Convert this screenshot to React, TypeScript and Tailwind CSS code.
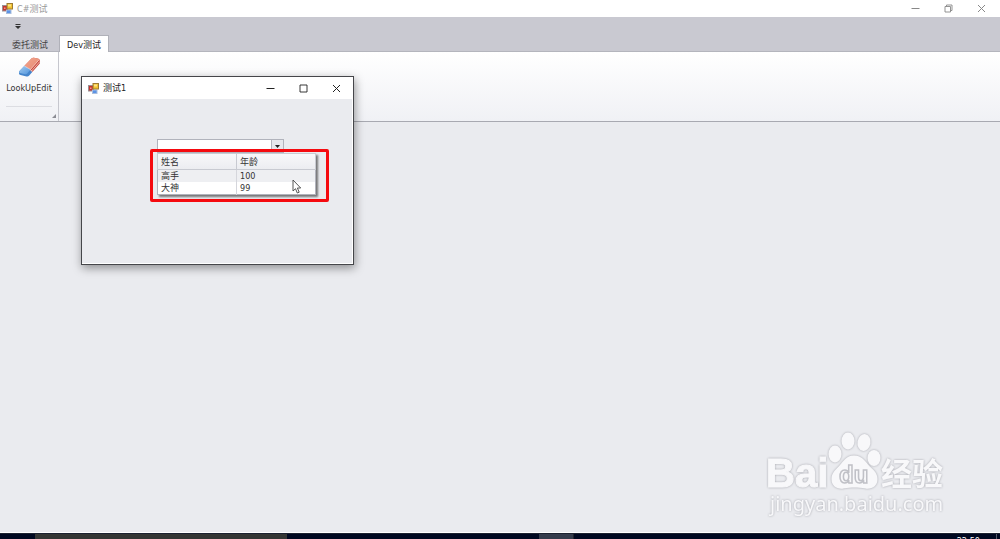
import { useState } from "react";

type Person = {
  name: string;
  age: number;
};

type WindowButtonsProps = {
  className: string;
  maximized?: boolean;
};

const people: Person[] = [
  { name: "高手", age: 100 },
  { name: "大神", age: 99 },
];

const tabs = ["委托测试", "Dev测试"];

function FormIcon() {
  return (
    <svg className="h-[11px] w-[11px] flex-shrink-0" viewBox="0 0 11 11" aria-hidden="true">
      <rect x="0.5" y="2.5" width="5" height="5.5" fill="#c5352d" stroke="#9a8f94" />
      <rect x="4.5" y="7" width="4.5" height="3.5" fill="#5b93e6" stroke="#a9bedd" />
      <rect x="5" y="0.5" width="5.5" height="5.5" fill="#f3c32f" stroke="#9d7b33" />
      <rect x="6" y="1.5" width="3" height="2" fill="#fbe48a" />
      <rect x="2" y="4.5" width="1.5" height="1.5" fill="#ef9a90" />
    </svg>
  );
}

function WindowButtons({ className, maximized = false }: WindowButtonsProps) {
  return (
    <div className={`ml-auto flex h-full ${className}`}>
      <button type="button" aria-label="Minimize" className="flex w-[33px] items-center justify-center">
        <svg className="h-[9px] w-[9px]" viewBox="0 0 9 9" fill="none" stroke="currentColor">
          <path d="M0.5 4.5h8" />
        </svg>
      </button>
      <button type="button" aria-label="Maximize" className="flex w-[33px] items-center justify-center">
        <svg className="h-[9px] w-[9px]" viewBox="0 0 9 9" fill="none" stroke="currentColor">
          {maximized ? (
            <path d="M1 2.5h5.5v5.5h-5.5zM2.5 2.5v-1.5h5.5v5.5h-1.5" strokeWidth="0.9" />
          ) : (
            <path d="M1 1h7v7h-7z" strokeWidth="0.9" />
          )}
        </svg>
      </button>
      <button type="button" aria-label="Close" className="flex w-[33px] items-center justify-center">
        <svg className="h-[9px] w-[9px]" viewBox="0 0 9 9" fill="none" stroke="currentColor">
          <path d="M1 1l7 7M8 1l-7 7" />
        </svg>
      </button>
    </div>
  );
}

function EraserIcon() {
  return (
    <svg className="h-[22px] w-[24px]" viewBox="0 0 24 22" aria-hidden="true">
      <defs>
        <linearGradient id="eraserRed" x1="0" y1="0" x2="1" y2="1">
          <stop offset="0" stopColor="#f3a58c" />
          <stop offset="1" stopColor="#e58a74" />
        </linearGradient>
        <linearGradient id="eraserBlue" x1="0" y1="0" x2="1" y2="1">
          <stop offset="0" stopColor="#a5cdf0" />
          <stop offset="1" stopColor="#4f93dc" />
        </linearGradient>
      </defs>
      <path d="M14.5 2.5q1-1 2.400-.7l4.600 1q1.500.5 1.300 2v2.700l-7.500 8.500-8-6z" fill="#c94a3c" />
      <path d="M14.5 2.5q1-1 2.400-.7l4.600 1q1 .3.300 1.200l-8.300 9.500-6.200-3.500z" fill="url(#eraserRed)" />
      <path d="M7.300 10l8 6-3.300 3.800q-1 1-2.500.6l-6-1.400q-1.500-.4-1.500-1.600v-2z" fill="#4585cc" />
      <path d="M7.300 10l6.200 3.500-3.500 4.300q-.6.700-1.800.4l-5.200-1.300q-1.800-.5-.5-1.900z" fill="url(#eraserBlue)" />
      <path d="M13.500 13.500l8.300-9.500M14.500 15l8.200-9.300" fill="none" stroke="#fbe0d8" strokeWidth="0.7" />
      <path d="M7.300 10l6.200 3.500 1.800 2" fill="none" stroke="#f5eff2" strokeWidth="0.6" />
    </svg>
  );
}

function LookUpEdit() {
  const [value, setValue] = useState("");
  const [open, setOpen] = useState(true);
  const [active, setActive] = useState(0);

  return (
    <div className="relative w-[127px]">
      <div className="flex h-[14px] border border-[#b1b3bc] bg-white">
        <input
          type="text"
          aria-label="LookUpEdit"
          value={value}
          onChange={(e) => setValue(e.target.value)}
          className="min-w-0 flex-1 px-1 text-[9px] outline-none"
        />
        <button
          type="button"
          aria-label="Open list"
          onClick={() => setOpen(!open)}
          className="flex w-3 items-center justify-center border-l border-[#b1b3bc] bg-[#e6e7ec]"
        >
          <svg className="h-[3px] w-[5px]" viewBox="0 0 5 3" aria-hidden="true">
            <path d="M0 0h5l-2.5 3z" fill="#222" />
          </svg>
        </button>
      </div>

      {open && (
        <div className="absolute top-[10px] -left-[7px] rounded-[2px] border-3 border-[#f50a0f] pt-px pr-[10px] pb-1 pl-1">
          <table className="w-[159px] table-fixed border-collapse border border-[#b1b3bc] bg-white text-left text-[9px] leading-3 text-[#333] shadow-[2px_2px_2px_rgba(0,0,0,0.5)]">
            <thead>
              <tr className="h-[16px] bg-linear-to-b from-[#f8f8fa] to-[#ebecf0]">
                <th className="border border-[#c8cad1] px-[3px] py-0 font-normal">姓名</th>
                <th className="border border-[#c8cad1] px-[3px] py-0 font-normal">年龄</th>
              </tr>
            </thead>
            <tbody>
              {people.map((person, i) => (
                <tr
                  key={person.name}
                  onClick={() => {
                    setActive(i);
                    setValue(person.name);
                  }}
                  className={`h-3 ${i === active ? "bg-[#eeeff2]" : "bg-white"}`}
                >
                  <td className="border-r border-[#d5d6dc] px-[3px] py-0">{person.name}</td>
                  <td className="px-[3px] py-0">{person.age}</td>
                </tr>
              ))}
            </tbody>
          </table>
          {/* mouse pointer */}
          <svg className="absolute top-[27px] left-[139px] h-[15px] w-[10px]" viewBox="0 0 10 15" aria-hidden="true">
            <path
              d="M1 1v11l2.500-2.300 1.800 4.300 1.900-.8-1.800-4.200h3.300z"
              fill="#fff"
              stroke="#444"
              strokeWidth="0.900"
            />
          </svg>
        </div>
      )}
    </div>
  );
}

function TestDialog() {
  return (
    <section
      aria-label="测试1"
      className="absolute top-[76px] left-[81px] w-[273px] border border-[#45464a] bg-white shadow-[1px_3px_9px_rgba(0,0,0,0.4)]"
    >
      <header className="flex h-[22px] items-center gap-1 pl-[6px] text-[#222]">
        <FormIcon />
        <h2 className="text-[9px]">测试1</h2>
        <WindowButtons className="text-[#222]" />
      </header>
      <div className="mr-px mb-px h-[164px] bg-[#eaebef] pt-10 pl-[75px]">
        <LookUpEdit />
      </div>
    </section>
  );
}

function Watermark() {
  return (
    <svg
      className="absolute right-[50px] bottom-[12px] h-[96px] w-[186px] drop-shadow-[0_0_1px_#a4a5ac]"
      viewBox="0 0 186 96"
      fill="#f8f8fa"
    >
      <text
        x="2"
        y="56"
        fontSize="40"
        fontWeight="700"
        stroke="#f8f8fa"
        fontFamily="Liberation Sans, Arial, sans-serif"
      >
        Bai
      </text>
      <ellipse cx="71" cy="23" rx="6.500" ry="8.500" />
      <ellipse cx="84" cy="10" rx="6.500" ry="8.500" />
      <ellipse cx="100" cy="11.500" rx="6.500" ry="8.500" transform="rotate(10 100 11.5)" />
      <ellipse cx="110" cy="27" rx="6.500" ry="8" />
      <path d="M90 24.500c7 0 10.500 4.500 14 9 4 4.500 9.500 7.500 9.500 14.500 0 7-5.500 10.500-12 9.500-8-1.300-14-1.300-22 0-6.500 1-12-2.500-12-9.500 0-6.500 4.500-9.500 8.500-14 4-4.500 7-9.500 14-9.500z" />
      <text
        x="75"
        y="52"
        fontSize="24"
        fontWeight="700"
        stroke="#c0c1c7"
        strokeWidth="1.500"
        fontFamily="Liberation Sans, Arial, sans-serif"
      >
        du
      </text>
      <text x="117" y="54" fontSize="31" fontWeight="700" fontFamily="Noto Sans CJK SC, sans-serif">
        经验
      </text>
      <text x="6" y="80" fontSize="20" fontFamily="Noto Sans, sans-serif">
        jingyan.baidu.com
      </text>
    </svg>
  );
}

export default function App() {
  const [selectedTab, setSelectedTab] = useState(1);

  return (
    <div className="relative flex h-screen flex-col overflow-hidden bg-[#eaebef] font-['DejaVu_Sans_Condensed','DejaVu_Sans','Noto_Sans_CJK_SC',sans-serif] text-[9px] leading-3 text-[#333]">
      <header className="flex h-[17px] flex-shrink-0 items-center gap-1 bg-white pr-[2px] pl-[2px]">
        <FormIcon />
        <h1 className="text-[9px] text-[#999]">C#测试</h1>
        <WindowButtons maximized className="text-[#888]" />
      </header>

      {/* Quick access bar and ribbon tabs */}
      <div className="flex-shrink-0 border-b border-[#b4b5bd] bg-[#c9c9d1]">
        <div className="flex h-[18px] items-center pl-[15px]">
          <button type="button" aria-label="Customize toolbar">
            <svg className="h-[5px] w-[6px]" viewBox="0 0 6 5" aria-hidden="true">
              <path d="M0.5 0h5v1h-5zM0 2h6l-3 3z" fill="#333" />
            </svg>
          </button>
        </div>
        <nav className="-mb-px flex h-[17px]">
          {tabs.map((tab, i) => (
            <button
              key={tab}
              type="button"
              onClick={() => setSelectedTab(i)}
              className={
                i === selectedTab
                  ? "border border-b-0 border-[#b0b1b9] bg-white px-[7px] pt-px text-[#222]"
                  : "pt-[2px] pr-[11px] pl-3 text-[#444]"
              }
            >
              {tab}
            </button>
          ))}
        </nav>
      </div>

      <div className="flex h-[70px] flex-shrink-0 border-b border-[#a8a9b1] bg-linear-to-b from-white to-[#f0f1f5]">
        <div className="relative flex w-[59px] flex-col items-center border-r border-[#c6c7ce] pt-1">
          <button type="button" className="flex flex-col items-center gap-1">
            <EraserIcon />
            <span>LookUpEdit</span>
          </button>
          <div className="mt-3 w-[46px] border-t border-[#dcdde2]" />
          <svg className="absolute right-[2px] bottom-[3px] h-1 w-1" viewBox="0 0 4 4" aria-hidden="true">
            <path d="M4 0v4h-4z" fill="#8b8c94" />
          </svg>
        </div>
      </div>

      <main className="flex-1 border-b border-white">
        <TestDialog />
        <Watermark />
      </main>

      <footer className="flex h-[6px] flex-shrink-0 overflow-hidden border-t border-[#1c2230] bg-[#000820]">
        <div className="ml-[35px] w-[252px] bg-[#343634]" />
        <div className="ml-[252px] w-[35px] border-r border-[#20242c] bg-[#343b4b]" />
        <time className="mt-px mr-4 ml-auto text-[9px] leading-3 text-white">22:50</time>
        <div className="mr-[3px] w-px bg-[#555b68]" />
      </footer>
    </div>
  );
}
